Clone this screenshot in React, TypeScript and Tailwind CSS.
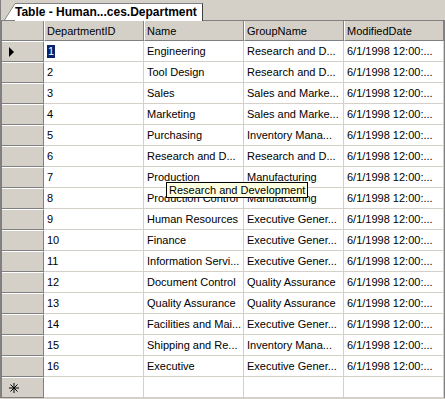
const rows: [string, string, string][] = [
  ["1", "Engineering", "Research and D..."],
  ["2", "Tool Design", "Research and D..."],
  ["3", "Sales", "Sales and Marke..."],
  ["4", "Marketing", "Sales and Marke..."],
  ["5", "Purchasing", "Inventory Mana..."],
  ["6", "Research and D...", "Research and D..."],
  ["7", "Production", "Manufacturing"],
  ["8", "Production Control", "Manufacturing"],
  ["9", "Human Resources", "Executive Gener..."],
  ["10", "Finance", "Executive Gener..."],
  ["11", "Information Servi...", "Executive Gener..."],
  ["12", "Document Control", "Quality Assurance"],
  ["13", "Quality Assurance", "Quality Assurance"],
  ["14", "Facilities and Mai...", "Executive Gener..."],
  ["15", "Shipping and Re...", "Inventory Mana..."],
  ["16", "Executive", "Executive Gener..."],
];

const cell =
  "h-[21px] w-[100px] shrink-0 border-r border-b border-[#d4d0c8] bg-white pl-[3px] pt-px flex items-center overflow-hidden whitespace-nowrap";

function RowHeader({ children }: { children?: React.ReactNode }) {
  return (
    <div className="h-[21px] w-[42px] shrink-0 bg-[#d4d0c8] border-t border-t-white border-b border-b-[#808080] border-r border-r-[#808080] flex items-center pl-[7px]">
      {children}
    </div>
  );
}

function HeaderCell({ label }: { label: string }) {
  return (
    <div className="h-[20px] w-[100px] shrink-0 bg-[#d4d0c8] border-l border-l-white border-r border-r-[#808080] border-b border-b-[#808080] pl-[2px] pt-[2px] flex items-center">
      {label}
    </div>
  );
}

export default function App() {
  return (
    <div
      className="relative w-[445px] h-[399px] overflow-hidden bg-[#d4d0c8] text-[11px] text-black leading-none"
      style={{ fontFamily: '"Liberation Sans", Arial, sans-serif' }}
    >
      {/* Tab strip */}
      <div className="flex h-[21px] items-end border-l border-[#808080] border-b border-b-[#808080]">
        <div className="flex h-[17px] ml-[3px] items-stretch">
          <svg width="11" height="17" viewBox="0 0 11 17" className="shrink-0">
            <path d="M0 17 L11 0 L11 17 Z" fill="#ffffff" />
            <path d="M0.5 17 L11 0.5" stroke="#808080" strokeWidth="1" fill="none" />
          </svg>
          <div className="bg-white border-t border-t-[#808080] border-r border-r-[#404040] pr-[5px] flex items-center font-bold text-[12px] -mb-px pb-px">
            Table - Human...ces.Department
          </div>
        </div>
      </div>

      {/* Grid */}
      <div className="flex flex-col border-l-2 border-l-[#808080] border-r border-r-[#808080]">
        <div className="flex">
          <div className="h-[20px] w-[42px] shrink-0 bg-[#d4d0c8] border-r border-r-[#808080] border-b border-b-[#808080]" />
          <HeaderCell label="DepartmentID" />
          <HeaderCell label="Name" />
          <HeaderCell label="GroupName" />
          <HeaderCell label="ModifiedDate" />
        </div>
        {rows.map(([id, name, group], i) => (
          <div key={id} className="flex">
            <RowHeader>
              {i === 0 && (
                <svg width="6" height="10" viewBox="0 0 6 10">
                  <path d="M0 0 L5 5 L0 10 Z" fill="#000" />
                </svg>
              )}
            </RowHeader>
            <div className={cell}>
              {i === 0 ? (
                <span className="bg-[#0a246a] text-white px-[1px] h-[13px] flex items-center">{id}</span>
              ) : (
                id
              )}
            </div>
            <div className={cell}>{name}</div>
            <div className={cell}>{group}</div>
            <div className={cell}>6/1/1998 12:00:...</div>
          </div>
        ))}
        <div className="flex">
          <RowHeader>
            <svg width="10" height="10" viewBox="0 0 10 10">
              <g stroke="#000" strokeWidth="1">
                <line x1="5" y1="0" x2="5" y2="10" />
                <line x1="0" y1="5" x2="10" y2="5" />
                <line x1="1.5" y1="1.5" x2="8.5" y2="8.5" />
                <line x1="8.5" y1="1.5" x2="1.5" y2="8.5" />
              </g>
            </svg>
          </RowHeader>
          <div className={cell} />
          <div className={cell} />
          <div className={cell} />
          <div className={cell} />
        </div>
      </div>

      {/* Tooltip */}
      <div className="absolute left-[166px] top-[182px] h-[16px] bg-[#ffffe1] border border-black px-[2px] flex items-center whitespace-nowrap">
        Research and Development
      </div>
    </div>
  );
}
